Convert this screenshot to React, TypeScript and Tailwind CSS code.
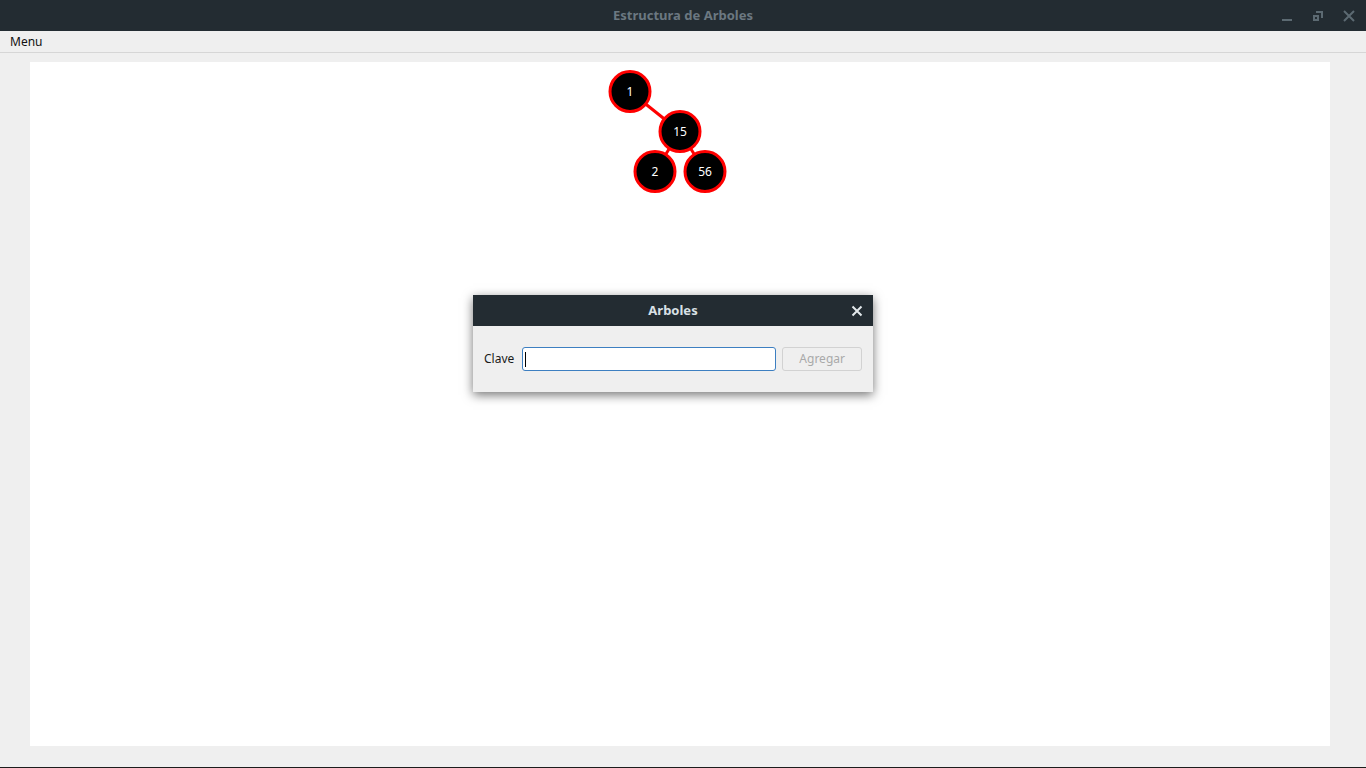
import React from 'react';

type TreeNode = { key: string; x: number; y: number };

// positions relative to the white canvas
const nodes: TreeNode[] = [
  { key: '1', x: 600, y: 29.5 },
  { key: '15', x: 650, y: 69.5 },
  { key: '2', x: 625, y: 109.5 },
  { key: '56', x: 675, y: 109.5 },
];

const edges: [number, number][] = [
  [0, 1],
  [1, 2],
  [1, 3],
];

function TreeCanvas() {
  return (
    <svg className="absolute left-0 top-0" width="1300" height="684">
      {edges.map(([a, b]) => (
        <line
          key={`${a}-${b}`}
          x1={nodes[a].x}
          y1={nodes[a].y}
          x2={nodes[b].x}
          y2={nodes[b].y}
          stroke="#ff0000"
          strokeWidth="3"
        />
      ))}
      {nodes.map((n) => (
        <g key={n.key}>
          <circle cx={n.x} cy={n.y} r="20" fill="#000" stroke="#ff0000" strokeWidth="3" />
          <text
            x={n.x}
            y={n.y + 4}
            textAnchor="middle"
            fill="#fff"
            fontSize="12"
            fontFamily="'Noto Sans', 'Open Sans', sans-serif"
          >
            {n.key}
          </text>
        </g>
      ))}
    </svg>
  );
}

function WindowButtons() {
  return (
    <div className="absolute right-0 top-0 flex h-[31px] items-center">
      <svg width="12" height="12" viewBox="0 0 12 12" className="mr-[19px]">
        <rect x="1" y="9" width="10" height="2" fill="#5c6a72" />
      </svg>
      <svg width="12" height="12" viewBox="0 0 12 12" className="mr-[19px]">
        <path d="M4 1h7v7H9V3H4z" fill="#5c6a72" />
        <rect x="1" y="5" width="6" height="6" fill="#5c6a72" />
        <rect x="3" y="7" width="2" height="2" fill="#232c32" />
      </svg>
      <svg width="12" height="12" viewBox="0 0 12 12" className="mr-[11px]">
        <path d="M1 1L11 11M11 1L1 11" stroke="#5c6a72" strokeWidth="2" />
      </svg>
    </div>
  );
}

function Dialog() {
  return (
    <div className="absolute left-[473px] top-[295px] w-[400px] shadow-[0_3px_10px_rgba(0,0,0,0.55)]">
      <div className="relative flex h-[31px] items-center justify-center bg-[#232c32] pt-px">
        <span className="text-[13px] font-bold text-[#d9e0e5]">Arboles</span>
        <svg width="12" height="12" viewBox="0 0 12 12" className="absolute right-[10px] top-[10px]">
          <path d="M1.5 1.5L10.5 10.5M10.5 1.5L1.5 10.5" stroke="#e3e8eb" strokeWidth="2" />
        </svg>
      </div>
      <div className="flex h-[66px] items-center bg-[#efefef] pl-[11px] pr-[11px]">
        <span className="mr-[8px] text-[12px] text-[#1a1a1a]">Clave</span>
        <div className="relative flex h-[24px] w-[255px] items-center rounded-[3px] border border-[#3d7fc1] bg-white">
          <span className="ml-[2px] h-[15px] w-px bg-black" />
        </div>
        <button className="ml-[6px] h-[24px] w-[80px] rounded-[3px] border border-[#d2d2d2] bg-[#efefef] text-[12px] text-[#a9a9a9]">
          Agregar
        </button>
      </div>
    </div>
  );
}

export default function App() {
  return (
    <div className="relative flex h-[768px] w-[1366px] flex-col overflow-hidden bg-[#efefef] font-['Noto_Sans','Open_Sans',sans-serif]">
      <div className="relative flex h-[31px] shrink-0 items-center justify-center bg-[#232c32] pt-px">
        <span className="text-[13px] font-bold text-[#6b7881]">Estructura de Arboles</span>
        <WindowButtons />
      </div>

      <div className="flex h-[22px] shrink-0 items-center border-b border-[#d6d6d6] pl-[10px] text-[12px] text-[#111]">
        Menu
      </div>

      <div className="flex flex-1 flex-col pl-[30px] pr-[36px] pt-[9px] pb-[21px]">
        <div className="relative flex-1 bg-white">
          <TreeCanvas />
        </div>
      </div>
      <div className="h-px shrink-0 bg-[#1c1c1c]" />

      <Dialog />
    </div>
  );
}
